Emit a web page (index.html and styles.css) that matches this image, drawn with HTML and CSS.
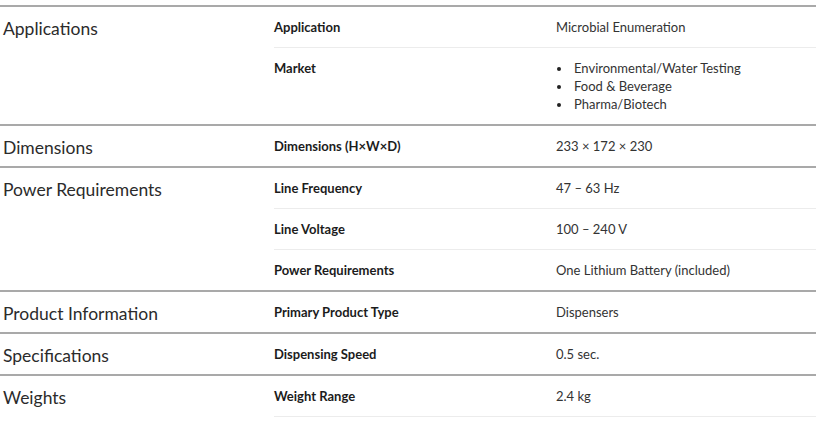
FILE: index.html
```html
<!DOCTYPE html>
<html>
<head>
<meta charset="utf-8">
<link rel="stylesheet" href="styles.css">
</head>
<body>
<div class="specs">
  <section class="group">
    <h3 class="group-title">Applications</h3>
    <div class="rows">
      <div class="row"><div class="label">Application</div><div class="value">Microbial Enumeration</div></div>
      <div class="row"><div class="label">Market</div><div class="value"><ul class="bullets"><li>Environmental/Water Testing</li><li>Food &amp; Beverage</li><li>Pharma/Biotech</li></ul></div></div>
    </div>
  </section>
  <section class="group">
    <h3 class="group-title">Dimensions</h3>
    <div class="rows">
      <div class="row"><div class="label">Dimensions (H×W×D)</div><div class="value">233 × 172 × 230</div></div>
    </div>
  </section>
  <section class="group">
    <h3 class="group-title">Power Requirements</h3>
    <div class="rows">
      <div class="row"><div class="label">Line Frequency</div><div class="value">47 – 63 Hz</div></div>
      <div class="row"><div class="label">Line Voltage</div><div class="value">100 – 240 V</div></div>
      <div class="row"><div class="label">Power Requirements</div><div class="value">One Lithium Battery (included)</div></div>
    </div>
  </section>
  <section class="group">
    <h3 class="group-title">Product Information</h3>
    <div class="rows">
      <div class="row"><div class="label">Primary Product Type</div><div class="value">Dispensers</div></div>
    </div>
  </section>
  <section class="group">
    <h3 class="group-title">Specifications</h3>
    <div class="rows">
      <div class="row"><div class="label">Dispensing Speed</div><div class="value">0.5 sec.</div></div>
    </div>
  </section>
  <section class="group">
    <h3 class="group-title">Weights</h3>
    <div class="rows">
      <div class="row last"><div class="label">Weight Range</div><div class="value">2.4 kg</div></div>
    </div>
  </section>
</div>
</body>
</html>
```

FILE: styles.css
```css
html, body {
  margin: 0;
  padding: 0;
  background: #fff;
}
body {
  font-family: Lato, "Open Sans", sans-serif;
  color: #333;
}
.specs {
  margin: 5px 4px 0 0;
}
.group {
  display: grid;
  grid-template-columns: 274px 1fr;
  border-top: 2px solid #a9a9a9;
}
.group-title {
  margin: 0;
  padding: 12px 0 0 3px;
  font-size: 17.5px;
  font-weight: 400;
  line-height: 20px;
  color: #2b2b2b;
}
.rows {
  display: flex;
  flex-direction: column;
}
.row {
  display: grid;
  grid-template-columns: 282px 1fr;
  padding: 11px 0;
  font-size: 13px;
  line-height: 18px;
  border-bottom: 1px solid #ececec;
}
.group .row:last-child {
  border-bottom: none;
}
.group .row.last {
  border-bottom: 1px solid #ececec;
}
.label {
  font-weight: 700;
  color: #1c1c1c;
}
.value {
  color: #333;
}
.bullets {
  list-style: none;
  margin: 0;
  padding: 0;
}
.bullets li {
  position: relative;
  padding-left: 18px;
}
.bullets li::before {
  content: "";
  position: absolute;
  left: 1px;
  top: 8px;
  width: 4px;
  height: 4px;
  border-radius: 50%;
  background: #222;
}
```
